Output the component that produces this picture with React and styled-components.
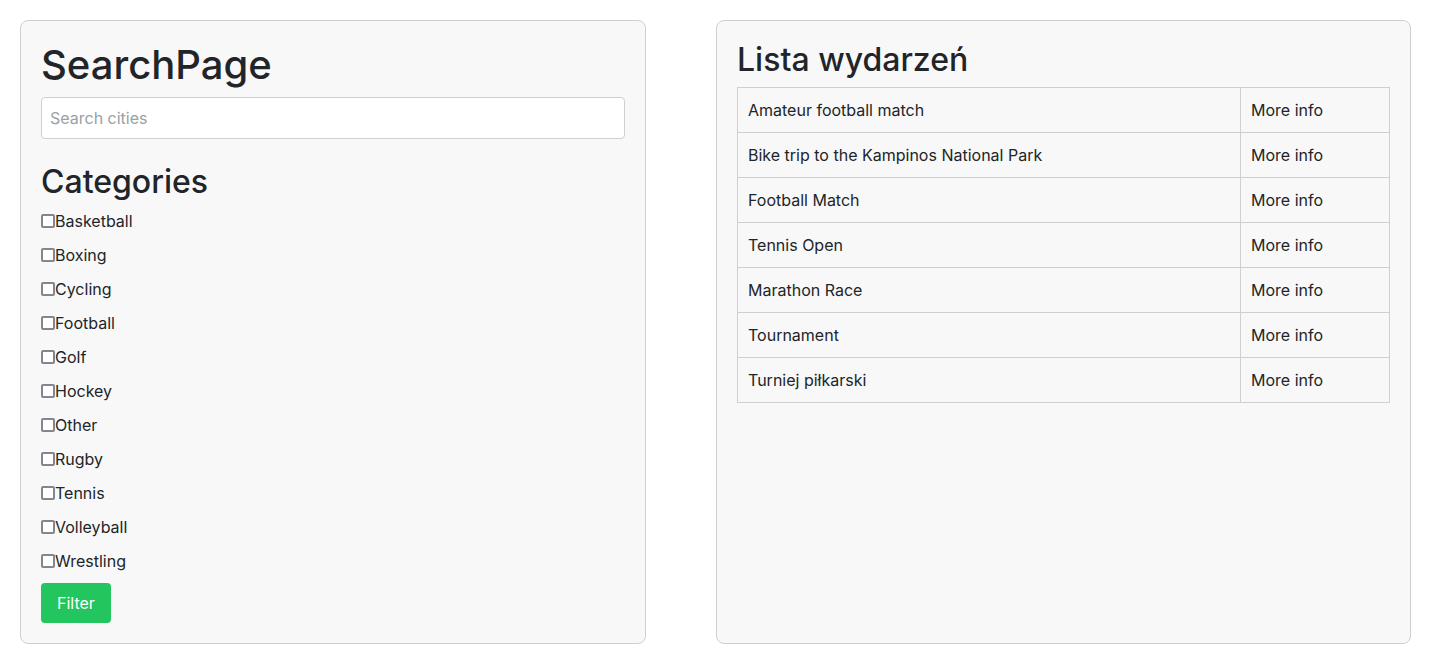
import React from "react";
import styled, { createGlobalStyle } from "styled-components";

const GlobalStyle = createGlobalStyle`
  html, body {
    margin: 0;
    padding: 0;
    background: #fff;
  }
  body {
    font-family: Inter, "Noto Sans", sans-serif;
    font-size: 16px;
    line-height: 1.5;
    color: #212529;
  }
  * {
    box-sizing: border-box;
  }
`;

const Page = styled.div`
  display: flex;
  gap: 70px;
  align-items: stretch;
  padding: 20px;
  height: 664px;
`;

const Panel = styled.div`
  flex: 0 0 ${(p) => p.width}px;
  background-color: #f8f8f8;
  border: 1px solid #cfcfcf;
  border-radius: 8px;
  padding: 20px;
  display: flex;
  flex-direction: column;
`;

const Title = styled.h1`
  margin: 0 0 8px;
  font-size: 40px;
  font-weight: 500;
  line-height: 1.2;
`;

const Subtitle = styled.h2`
  margin: ${(p) => p.margin || "0 0 8px"};
  font-size: 32px;
  font-weight: 500;
  line-height: 1.2;
`;

const SearchInput = styled.input`
  display: block;
  width: 100%;
  height: 42px;
  padding: 8px;
  font-family: inherit;
  font-size: 16px;
  color: #212529;
  background: #fff;
  border: 1px solid #cfcfcf;
  border-radius: 4px;
  outline: none;

  &::placeholder {
    color: #9aa0a6;
  }
`;

const CategoryList = styled.div`
  display: flex;
  flex-direction: column;
  gap: 10px;
  margin-bottom: 10px;
`;

const CategoryLabel = styled.label`
  display: flex;
  align-items: center;
  height: 24px;
  line-height: 24px;
`;

const Checkbox = styled.input.attrs({ type: "checkbox" })`
  margin: 0;
  width: 14px;
  height: 14px;
  appearance: none;
  border: 2px solid #85858f;
  border-radius: 2px;
  background: #fff;
  flex: 0 0 14px;
`;

const FilterButton = styled.button`
  align-self: flex-start;
  padding: 8px 16px;
  font-family: inherit;
  font-size: 16px;
  line-height: 24px;
  color: #fff;
  background-color: #22c55e;
  border: none;
  border-radius: 4px;
  cursor: pointer;
`;

const EventsTable = styled.table`
  width: 100%;
  border-collapse: collapse;
`;

const Cell = styled.td`
  border: 1px solid #cfcfcf;
  padding: 10px;
  line-height: 24px;
  width: ${(p) => (p.narrow ? "149px" : "auto")};
`;

const categories = [
  "Basketball",
  "Boxing",
  "Cycling",
  "Football",
  "Golf",
  "Hockey",
  "Other",
  "Rugby",
  "Tennis",
  "Volleyball",
  "Wrestling",
];

const events = [
  "Amateur football match",
  "Bike trip to the Kampinos National Park",
  "Football Match",
  "Tennis Open",
  "Marathon Race",
  "Tournament",
  "Turniej piłkarski",
];

export default function App() {
  return (
    <>
      <GlobalStyle />
      <Page>
        <Panel width={626}>
          <Title>SearchPage</Title>
          <SearchInput placeholder="Search cities" />
          <Subtitle margin="24px 0 8px">Categories</Subtitle>
          <CategoryList>
            {categories.map((c) => (
              <CategoryLabel key={c}>
                <Checkbox />
                {c}
              </CategoryLabel>
            ))}
          </CategoryList>
          <FilterButton>Filter</FilterButton>
        </Panel>
        <Panel width={695}>
          <Subtitle>Lista wydarzeń</Subtitle>
          <EventsTable>
            <tbody>
              {events.map((e) => (
                <tr key={e}>
                  <Cell>{e}</Cell>
                  <Cell narrow>More info</Cell>
                </tr>
              ))}
            </tbody>
          </EventsTable>
        </Panel>
      </Page>
    </>
  );
}
